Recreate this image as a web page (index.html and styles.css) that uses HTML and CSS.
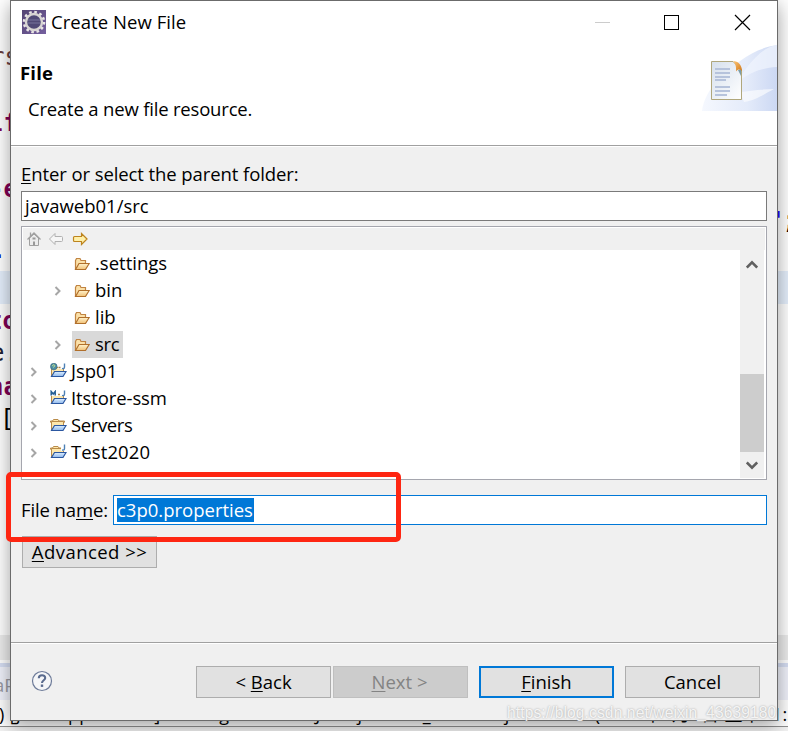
FILE: index.html
```html
<!DOCTYPE html>
<html lang="en">
<head>
<meta charset="utf-8">
<title>Create New File</title>
<link rel="stylesheet" href="styles.css">
</head>
<body>
<svg class="defs" width="0" height="0" aria-hidden="true">
  <defs>
    <linearGradient id="gold" x1="0" y1="0" x2="0" y2="1"><stop offset="0" stop-color="#fff3cd"/><stop offset="1" stop-color="#f1c176"/></linearGradient>
    <linearGradient id="blue" x1="0" y1="0" x2="0" y2="1"><stop offset="0" stop-color="#dceeff"/><stop offset="1" stop-color="#8fb8ec"/></linearGradient>
    <symbol id="folder" viewBox="0 0 16 14">
      <path d="M1.500 12V3.500L2.500 1.500H6L7 3.500H11.500V6" fill="#fbe0a8" stroke="#c08442" stroke-width="1.200"/>
      <path d="M1.500 12.500L5 6.500H15.200L11.500 12.500Z" fill="url(#gold)" stroke="#b06f2b" stroke-width="1.200"/>
    </symbol>
    <symbol id="project" viewBox="0 0 17 16">
      <path d="M1.500 13V4.500H13.500V9" fill="#fde7ac" stroke="#b98b49"/>
      <path d="M1.500 13.500L4.500 8.500H16L13 13.500Z" fill="url(#blue)" stroke="#2b57a0" stroke-width="1.200"/>
    </symbol>
    <symbol id="chev" viewBox="0 0 8 10"><path d="M1.500 1L5.500 5L1.500 9" fill="none" stroke="#a6a6a6" stroke-width="2"/></symbol>
  </defs>
</svg>
<div class="desktop">
  <div class="line-hl"></div>
  <div class="band"></div>
  <div class="tabs"></div>
  <div class="rule"></div>
  <span class="code c1">rs</span>
  <span class="code kw c2">if</span>
  <span class="code kw c3"><i>-</i>e</span>
  <span class="code nav c4">.</span>
  <span class="code kw c5">to</span>
  <span class="code c6"><i>e</i>.</span>
  <span class="code kw c7">na</span>
  <span class="code c8">[</span>
  <span class="code c9">"</span>
  <span class="code c10">;</span>
  <span class="tab-text">aP</span>
  <span class="console">) [Java Application] C:\Program Files\Java\jre1.8.0_131\bin\javaw.exe (2020年5月7日 上午11:3</span>

  <main class="dialog">
    <header class="banner">
      <div class="titlebar">
        <svg class="app" width="24" height="24" viewBox="0 0 24 24">
          <defs><linearGradient id="ap" x1="0" y1="0" x2="1" y2="1"><stop offset="0" stop-color="#534372"/><stop offset="1" stop-color="#75609f"/></linearGradient></defs>
          <rect width="24" height="24" fill="url(#ap)"/>
          <circle cx="12" cy="12" r="10" fill="none" stroke="#e8e5e5" stroke-width="2.600" stroke-dasharray="2.600 2.636"/>
          <circle cx="12" cy="12" r="8" fill="#504976" stroke="#d8d5d3" stroke-width="2.400"/>
          <path d="M6 10H18M6 13H18" stroke="#77759b"/>
        </svg>
        <span class="title">Create New File</span>
        <svg class="ctl" width="160" height="18" viewBox="0 0 160 18">
          <path d="M0 9.500H15" stroke="#ccc"/>
          <rect x="69.500" y="2.500" width="14" height="14" fill="none" stroke="#000"/>
          <path d="M140 2L155 17M155 2L140 17" stroke="#000" stroke-width="1.200"/>
        </svg>
      </div>
      <div class="intro">
        <div>
          <h1><span class="t-file">File</span></h1>
          <p><span class="t-desc">Create a new file resource.</span></p>
        </div>
        <svg class="art" width="75" height="67" viewBox="0 0 75 67">
          <defs>
            <linearGradient id="sw"><stop offset="0" stop-color="#f5f8fe"/><stop offset=".6" stop-color="#e4ebfa"/><stop offset="1" stop-color="#ccd8f3"/></linearGradient>
            <linearGradient id="pg" x1="0" y1="0" x2="1" y2="1"><stop offset="0" stop-color="#d6e0ed"/><stop offset="1" stop-color="#fff"/></linearGradient>
            <linearGradient id="fold" x1="0" y1="0" x2="1" y2="1"><stop offset="0" stop-color="#ffc87a"/><stop offset="1" stop-color="#cf7616"/></linearGradient>
          </defs>
          <path d="M0 66C3 43 24 26 38 16C50 7 62 2 75 0V66Z" fill="url(#sw)"/>
          <path d="M35 38C42 25 58 2 75 0V22C60 23 48 27 35 38Z" fill="#f1f5fd" opacity=".7"/>
          <path d="M38 47C48 46 60 44 72 44C62 49 55 55 42 57Z" fill="#fff" opacity=".6"/>
          <path d="M9.500 16.500H31L39.500 25V54.500H9.500Z" fill="url(#pg)" stroke="#b0a77c"/>
          <path d="M36 25L39 24V31Z" fill="#7c9da8"/>
          <path d="M31 16C36 16 40 20 40 26C38 24 36 24 34 26.500C34.500 21 33 18 31 16Z" fill="url(#fold)"/>
          <path d="M13 24H28M13 28H28M13 32H28M13 35H24M13 42H28M13 46H28M13 50H25" stroke="#b6c3dc" stroke-width="2"/>
        </svg>
      </div>
    </header>

    <section class="body">
      <label class="lbl"><span class="t-enter"><u>E</u>nter or select the parent folder:</span></label>
      <div class="field"><span class="t-path">javaweb01/src</span></div>
      <div class="tree">
        <div class="toolbar">
          <svg width="62" height="16" viewBox="0 0 62 16">
            <path d="M2.500 7V14.500H11.500V7L7 3Z" fill="#ececec" stroke="#a0a0a0"/>
            <path d="M.5 8.500L7 2L13.500 8.500M3.500 5V1.500" fill="none" stroke="#a0a0a0" stroke-width="1.300"/>
            <path d="M7 14.500V10.500M5.500 7.500H8.500" stroke="#999" stroke-width="2"/>
            <path d="M22.500 8L28 2.500V5.500H34.500Q35.500 5.500 35.500 6.500V9.500Q35.500 10.500 34.500 10.500H28V13.500Z" fill="#f6f6f6" stroke="#b1b1b1"/>
            <path d="M60 8L54.500 2.500V5.500H47.500Q46.500 5.500 46.500 6.500V9.500Q46.500 10.500 47.500 10.500H54.500V13.500Z" fill="#fff0a9" stroke="#bd841e" stroke-width="1.200"/>
          </svg>
        </div>
        <div class="view">
          <ul class="rows">
            <li class="sub"><b class="tw"></b><span class="item"><svg class="fi"><use href="#folder"/></svg><span class="r1">.settings</span></span></li>
            <li class="sub"><b class="tw"><svg><use href="#chev"/></svg></b><span class="item"><svg class="fi"><use href="#folder"/></svg><span class="r2">bin</span></span></li>
            <li class="sub"><b class="tw"></b><span class="item"><svg class="fi"><use href="#folder"/></svg><span class="r3">lib</span></span></li>
            <li class="sub"><b class="tw"><svg><use href="#chev"/></svg></b><span class="item sel"><svg class="fi"><use href="#folder"/></svg><span class="r4">src</span></span></li>
            <li><b class="tw"><svg><use href="#chev"/></svg></b><svg class="pi" viewBox="0 0 17 16"><use href="#project"/><path d="M8 0H17V6H8Z" fill="#fff"/><circle cx="3.800" cy="3.600" r="3.300" fill="#4f8fa6" stroke="#39687e" stroke-width=".7"/><path d="M2 3L4 1.500L5 3L3 4.500" stroke="#b7d98e" fill="none"/><path d="M8.500 4.500H10.500" stroke="#a77f43" stroke-width="1.500"/><path d="M14.500 .5V4Q14.500 6 12 5.500" stroke="#4d80b5" stroke-width="1.400" fill="none"/></svg><span class="r5">Jsp01</span></li>
            <li><b class="tw"><svg><use href="#chev"/></svg></b><svg class="pi" viewBox="0 0 17 16"><use href="#project"/><path d="M0 0H17V6H0Z" fill="#fff"/><path d="M1.200 5.500V1.500L3.200 4L5.200 1.500V5.500" stroke="#235d93" stroke-width="1.500" fill="none"/><path d="M8 4.500H10" stroke="#a77f43" stroke-width="1.500"/><path d="M14.500 .5V4Q14.500 6 12 5.500" stroke="#4d80b5" stroke-width="1.400" fill="none"/></svg><span class="r6">Itstore-ssm</span></li>
            <li><b class="tw"><svg><use href="#chev"/></svg></b><svg class="pi" viewBox="0 0 17 16"><path d="M.5 5.500V4H2.500L3.500 2.500H8L9 4H14.500V5.500" fill="#fde7ac" stroke="#b98b49"/><use href="#project"/></svg><span class="r7">Servers</span></li>
            <li><b class="tw"><svg><use href="#chev"/></svg></b><svg class="pi" viewBox="0 0 17 16"><path d="M.5 5.500V4H2.500L3.500 2.500H8L9 4H11" fill="#fde7ac" stroke="#b98b49"/><use href="#project"/><path d="M11 0H17V7H11Z" fill="#fff"/><path d="M14.500 .5V4.500Q14.500 6.500 12 6" stroke="#4d80b5" stroke-width="1.400" fill="none"/></svg><span class="r8">Test2020</span></li>
          </ul>
          <div class="scroll">
            <svg width="12" height="9" viewBox="0 0 12 9"><path d="M.8 7.500L6 2.300L11.200 7.500" fill="none" stroke="#606060" stroke-width="2.600"/></svg>
            <div class="thumb"></div>
            <svg width="12" height="9" viewBox="0 0 12 9"><path d="M.8 1.500L6 6.700L11.200 1.500" fill="none" stroke="#606060" stroke-width="2.600"/></svg>
          </div>
        </div>
      </div>
      <div class="name-row">
        <label><span class="t-name">File na<u>m</u>e:</span></label>
        <div class="field focus"><mark><span class="t-val">c3p0.properties</span></mark></div>
      </div>
      <div class="btn adv"><span class="t-adv"><u>A</u>dvanced &gt;&gt;</span></div>
    </section>

    <footer class="foot">
      <svg class="help" width="22" height="22" viewBox="0 0 22 22">
        <circle cx="11" cy="11" r="9.500" fill="#f5f6f8" stroke="#6d7b99" stroke-width="1.200"/>
        <path d="M7.800 8.300C7.800 4.300 14.200 4.300 14.200 8C14.200 10.300 11 10.300 11 13" fill="none" stroke="#5a6b8e" stroke-width="2.100"/>
        <rect x="9.800" y="14.500" width="2.400" height="2.400" fill="#5a6b8e"/>
      </svg>
      <div class="btn"><span class="t-back">&lt; <u>B</u>ack</span></div>
      <div class="btn off"><span class="t-next"><u>N</u>ext &gt;</span></div>
      <div class="btn main"><span class="t-fin"><u>F</u>inish</span></div>
      <div class="btn"><span class="t-can">Cancel</span></div>
    </footer>
  </main>
  <div class="marker"></div>
  <span class="water">https://blog.csdn.net/weixin_43639180</span>
</div>
</body>
</html>
```
FILE: styles.css
```css
* { box-sizing: border-box; }
body { margin: 0; font: 18.5px/27px "Open Sans", "Noto Sans", "Noto Sans CJK SC", sans-serif; color: #000; }
.defs { position: absolute; }
svg { display: block; flex: none; }
h1, p, ul { margin: 0; padding: 0; }
u { text-decoration-thickness: 1px; text-underline-offset: 2px; text-decoration-skip-ink: none; }
span { white-space: nowrap; }

.desktop { position: relative; width: 788px; height: 731px; overflow: hidden; background: #fff; }
.line-hl { position: absolute; top: 271px; width: 100%; height: 33px; background: #e5effc; }
.band { position: absolute; top: 635px; width: 100%; height: 25px; background: #ececec; }
.tabs { position: absolute; top: 663px; width: 100%; height: 37px; background: #f0f2fb; border-top: 4px solid #d6def3; }
.rule { position: absolute; top: 726px; width: 100%; height: 5px; background: #f3f3f3; border-top: 1px solid #909090; }
.code { position: absolute; font: 24px/30px "DejaVu Sans Mono", monospace; color: #6a3e3e; }
.code i { font-style: normal; color: #223; }
.kw { color: #7f0055; font-weight: bold; }
.nav { color: #0000c0; }
.c1 { left: -10px; top: 42px; }
.c2 { left: -12px; top: 108px; letter-spacing: 1px; }
.c3 { left: -11px; top: 174px; }
.c4 { left: -8px; top: 235px; }
.c5 { left: -12px; top: 306px; }
.c6 { left: -10px; top: 338px; color: #000; }
.c7 { left: -11px; top: 372px; }
.c8 { left: 0; top: 404px; color: #000; }
.c9 { left: 769px; top: 206px; color: #2a00ff; }
.c10 { left: 782px; top: 206px; color: #000; }
.tab-text { position: absolute; left: -6px; top: 671px; color: #9a9aa2; }
.console { position: absolute; left: -1px; top: 701px; font-size: 18px; letter-spacing: .36px; }

.dialog { position: absolute; left: 10px; top: 0; width: 768px; height: 721px; display: flex; flex-direction: column; background: #f0f0f0; border: 1px solid #6b6b6b; box-shadow: 0 5px 18px rgba(0,0,0,.38); }
.banner { height: 145px; background: #fff; border-bottom: 1px solid #a0a0a0; box-shadow: 0 1px #fff; }
.titlebar { display: flex; align-items: center; height: 41px; padding-left: 11px; }
.title { margin-left: 5px; letter-spacing: .05px; }
.ctl { margin-left: auto; margin-right: 22px; }
.intro { display: flex; justify-content: space-between; }
.intro h1 { font-size: 18.5px; line-height: 27px; margin: 17px 0 9px 9px; letter-spacing: .2px; }
.intro p { padding-left: 17px; }
.t-desc { letter-spacing: -.19px; }
.art { margin-top: 3px; }

.body { flex: none; height: 496px; padding: 14px 10px 0; }
.lbl { display: block; height: 31px; line-height: 27px; }
.t-enter { letter-spacing: -.09px; }
.field { height: 30px; display: flex; align-items: center; background: #fff; border: 1px solid #7a7a7a; padding: 0 0 2px 3px; }
.tree { display: flex; flex-direction: column; height: 254px; margin-top: 5px; border: 1px solid #a5a6ae; padding: 1px; background: #fff; }
.toolbar { height: 22px; background: #f0f0f0; padding: 3px 0 0 4px; }
.view { display: flex; justify-content: space-between; flex: 1; }
.rows { list-style: none; }
.rows li { display: flex; height: 27px; align-items: center; padding-left: 7px; }
.rows .sub { padding-left: 31px; }
.rows li span span, .rows li > svg + span { height: 27px; line-height: 25px; }
.tw { width: 18px; height: 10px; margin-top: 1px; }
.tw svg { width: 8px; height: 10px; }
.item { display: flex; align-items: center; height: 27px; padding: 0 4px 0 2px; }
.sel { background: #d9d9d9; }
.r4 { letter-spacing: -.3px; }
.r6 { letter-spacing: -.1px; }
.r7 { letter-spacing: -.4px; }
.r8 { letter-spacing: .1px; }
.fi { width: 16px; height: 14px; margin-right: 5px; }
.pi { width: 17px; height: 16px; margin: -2px 4px 0 2px; }
.scroll { display: flex; flex-direction: column; align-items: center; width: 24px; margin-right: 1px; padding: 10px 0 8px; background: #f0f0f0; }
.thumb { width: 24px; height: 78px; margin: auto 0 9px; background: #cdcdcd; }
.name-row { display: flex; align-items: center; margin-top: 15px; }
.name-row label { width: 92px; padding-bottom: 2px; }
.t-name { letter-spacing: -.1px; }
.focus { flex: 1; padding-bottom: 0; border-color: #0078d7; }
mark { height: 24px; line-height: 24px; background: #0078d7; color: #fff; width: 137px; margin-top: -1px; }
.btn { display: flex; flex: none; align-items: center; justify-content: center; width: 135px; height: 32px; padding-bottom: 2px; background: #e1e1e1; border: 1px solid #adadad; }
.adv { margin: 11px 0 0 1px; }
.t-adv { letter-spacing: .45px; }

.foot { display: flex; flex: 1; align-items: flex-start; border-top: 1px solid #a0a0a0; box-shadow: inset 0 1px #fff; padding: 23px 17px 0 20px; }
.help { margin: 4px auto 0 0; }
.off { margin: 0 11px 0 2px; background: #ccc; border-color: #bfbfbf; color: #838383; }
.t-next { position: relative; left: -1px; }
.main { margin-right: 11px; border: 2px solid #0078d7; }
.marker { position: absolute; left: 6px; top: 472px; width: 395px; height: 70px; border: 5px solid #fe2612; border-radius: 5px; }
.water { position: absolute; left: 507px; top: 703px; font: 15.6px/20px "Liberation Sans", sans-serif; letter-spacing: .11px; color: rgba(255,255,255,.85); text-shadow: 0 0 2px #999; }
```
